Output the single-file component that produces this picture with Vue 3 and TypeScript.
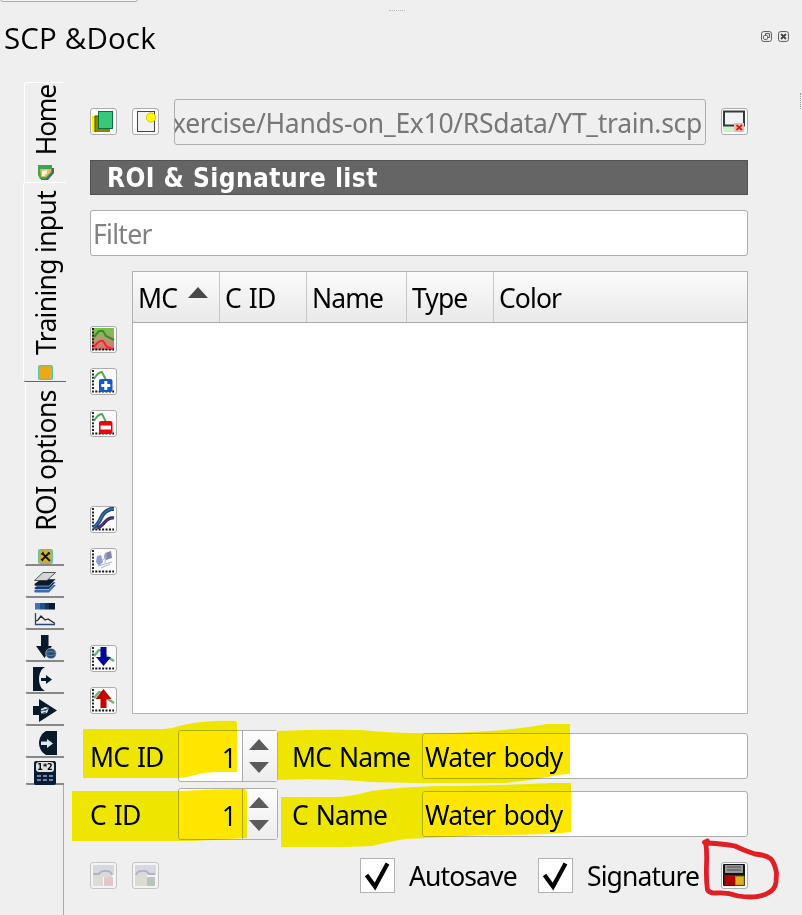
<script setup lang="ts">
import { ref } from 'vue'

interface SpectralTool {
  id: string
}

interface ClassRow {
  idLabel: string
  nameLabel: string
  id: number
  name: string
}

const columns: string[] = ['MC', 'C ID', 'Name', 'Type', 'Color']
const toolGroups: SpectralTool[][] = [
  [{ id: 'merge' }, { id: 'add' }, { id: 'remove' }],
  [{ id: 'signature' }, { id: 'scatter' }],
  [{ id: 'import' }, { id: 'export' }],
]
const filePath = 'xercise/Hands-on_Ex10/RSdata/YT_train.scp'
const rows = ref<ClassRow[]>([
  { idLabel: 'MC ID', nameLabel: 'MC Name', id: 1, name: 'Water body' },
  { idLabel: 'C ID', nameLabel: 'C Name', id: 1, name: 'Water body' },
])
const smallTabs: string[] = ['bands', 'plots', 'download', 'preprocess', 'process', 'postprocess', 'calc']
</script>

<template>
  <div class="dock">
    <div class="upper-edge"></div>
    <div class="grip-h"></div>
    <div class="grip-v"></div>

    <header class="titlebar">
      <h1>SCP &amp;Dock</h1>
      <div class="window-buttons">
        <svg width="11" height="11" viewBox="0 0 11 11">
          <rect x=".6" y=".6" width="9.8" height="9.8" rx="2" fill="#f5f5f5" stroke="#555" />
          <path d="M4.5 4V2.6H8.4V6.5H7" fill="none" stroke="#555" />
          <rect x="2.6" y="4.4" width="4" height="4" rx="1" fill="none" stroke="#555" />
        </svg>
        <svg width="11" height="11" viewBox="0 0 11 11">
          <rect x=".6" y=".6" width="9.8" height="9.8" rx="2" fill="#f5f5f5" stroke="#555" />
          <path d="M3 3L8 8M8 3L3 8" stroke="#444" stroke-width="1.8" />
        </svg>
      </div>
    </header>

    <div class="body">
      <nav class="tabs">
        <div class="tab home">
          <span class="tab-label">Home</span>
          <svg width="16" height="16" viewBox="0 0 16 16">
            <path d="M2 3H16V8L10 15H3Z" fill="#456c5c" />
            <path d="M0 0H14V7L8 14H2L0 10Z" fill="#3da64b" />
            <path d="M2 4H13V7L8 12H3Z" fill="#e9b56d" />
            <path d="M4 6L9 5L9 8L6 11H4Z" fill="#fff6dd" />
          </svg>
        </div>
        <div class="tab training">
          <span class="tab-label">Training input</span>
          <svg width="15" height="15" viewBox="0 0 15 15">
            <rect x=".6" y=".6" width="13.8" height="13.8" rx="1.5" fill="#eba915" stroke="#4fc6c0" stroke-width="1.2" />
          </svg>
        </div>
        <div class="tab options">
          <span class="tab-label">ROI options</span>
          <svg width="15" height="15" viewBox="0 0 15 15">
            <rect x=".6" y=".6" width="13.8" height="13.8" rx="1.5" fill="#d9ad2c" stroke="#4fc6c0" stroke-width="1.2" />
            <path d="M4 4L12 12M11.5 3.5L4 11" stroke="#151515" stroke-width="1.8" />
            <path d="M2.8 5L5 5L5 2.8M10 3.5L12 5M3 10L5 12" fill="none" stroke="#151515" stroke-width="1.2" />
          </svg>
        </div>
        <div v-for="t in smallTabs" :key="t" class="tab small" :class="t">
          <svg v-if="t === 'bands'" width="24" height="24" viewBox="0 0 24 24">
            <path d="M1 20L8 14H23L16 21.5H2Z" fill="#376bad" />
            <path d="M1 17L8 11H23L16 18.5H2Z" fill="#19396b" stroke="#e6edf5" stroke-width=".6" />
            <path d="M1 13L8 8H23L16 15H2Z" fill="#071a30" stroke="#e6edf5" stroke-width=".5" />
            <path d="M1.5 9.5L10 1.5H22.5L14 9.5Z" fill="#d5d7d7" stroke="#333" stroke-width=".8" />
          </svg>
          <svg v-else-if="t === 'plots'" width="24" height="24" viewBox="0 0 24 24">
            <rect x="2" y="0" width="5" height="6.5" fill="#3d76b5" />
            <rect x="7" y="0" width="5" height="6.5" fill="#295084" />
            <rect x="12" y="0" width="4" height="6.5" fill="#16345c" />
            <rect x="16" y="0" width="6" height="6.5" fill="#071b32" />
            <path d="M2.5 10V21.5H22" fill="none" stroke="#28477a" stroke-width="1.3" />
            <path d="M3 18L5 17L8 13L12 17L15 16L22 20.5" fill="none" stroke="#20262e" stroke-width="1.3" />
          </svg>
          <svg v-else-if="t === 'download'" width="24" height="24" viewBox="0 0 24 24">
            <path d="M8 0H15.5V11H19L11.5 23L3 11H8Z" fill="#071a2c" />
            <circle cx="18" cy="18.5" r="5.3" fill="#294d76" stroke="#dfe8ef" stroke-width=".6" />
            <path d="M13 17.5Q18 15 23 17.5M13 19.5Q18 22 23 19.5" fill="none" stroke="#7894af" stroke-width=".7" />
          </svg>
          <svg v-else-if="t === 'preprocess'" width="24" height="24" viewBox="0 0 24 24">
            <path d="M0 0H12C4 4 4 20 12 24H0Z" fill="#071a2c" />
            <path d="M8 11H13V8L19 12.5L13 17V14H8Z" fill="#071a2c" />
          </svg>
          <svg v-else-if="t === 'process'" width="24" height="24" viewBox="0 0 24 24">
            <path d="M0 7H6V0L24 11.5L6 23V16H0Z" fill="#071a2c" />
            <path d="M8 10L12 8L16 9L14 14L8 15Z" fill="#dce5ea" />
            <path d="M7 12L13 11L16 9M8 15L13 13" stroke="#36546c" />
          </svg>
          <svg v-else-if="t === 'postprocess'" width="24" height="24" viewBox="0 0 24 24">
            <path d="M24 0V24H13C9 22 6 17 6 12S9 2 13 0Z" fill="#071a2c" />
            <path d="M8 10.5H14V8L20 12.5L14 17V14H8Z" fill="#dae8f5" />
          </svg>
          <svg v-else width="24" height="24" viewBox="0 0 24 24">
            <rect x="1" y="0" width="22" height="24" rx="2" fill="#071b31" />
            <rect x="3" y="1" width="18" height="10" rx="3" fill="#dfe3e4" />
            <text x="12" y="8.5" text-anchor="middle">1*2</text>
            <g fill="#7182b5">
              <rect x="4" y="14" width="4" height="2" /><rect x="10" y="14" width="4" height="2" /><rect x="16" y="14" width="4" height="2" />
              <rect x="4" y="18" width="4" height="2" /><rect x="10" y="18" width="4" height="2" /><rect x="16" y="18" width="4" height="2" />
            </g>
          </svg>
        </div>
        <div class="tabs-rest"></div>
      </nav>

      <main class="panel">
        <div class="file-row">
          <button class="tool">
            <svg width="25" height="25" viewBox="0 0 25 25">
              <path d="M1 7H4V23H1Z" fill="#f5f500" /><rect x="4" y="7" width="15" height="16" fill="#8c8500" />
              <path d="M4 7H8M4 23V7" stroke="#4e4900" stroke-width="1" />
              <rect x="7.5" y="2.5" width="14" height="17" fill="#38c878" stroke="#087142" />
            </svg>
          </button>
          <button class="tool">
            <svg width="25" height="25" viewBox="0 0 25 25">
              <rect x="4.5" y="2.5" width="17" height="20" fill="#f2f2f2" stroke="#444" />
              <circle cx="18" cy="8.5" r="4.6" fill="#ffff00" stroke="#d7c400" />
            </svg>
          </button>
          <div class="path-field"><span>{{ filePath }}</span></div>
          <button class="tool end">
            <svg width="25" height="25" viewBox="0 0 25 25">
              <path d="M1 17H13V23H2L1 22Z" fill="#c9f5cb" />
              <rect x="2" y="2.5" width="20" height="14" fill="#f1f2f4" stroke="#303b3b" stroke-width="2" />
              <rect x="12" y="14" width="10" height="9" fill="#eebaaf" />
              <path d="M14.5 16L20 21M20 16L14.5 21" stroke="#ed1717" stroke-width="1.8" />
            </svg>
          </button>
        </div>

        <h2 class="section-title"><span>ROI &amp; Signature list</span></h2>
        <div class="filter"><span>Filter</span></div>

        <div class="list-area">
          <div class="tools">
            <div v-for="(group, gi) in toolGroups" :key="gi" class="tool-group">
              <button v-for="tool in group" :key="tool.id" class="tool">
                <svg width="25" height="25" viewBox="0 0 25 25">
                  <defs v-if="tool.id === 'merge'">
                    <linearGradient id="mergeFill" x1="0" y1="0" x2="0" y2="1">
                      <stop offset="0" stop-color="#71c54b" /><stop offset=".5" stop-color="#b29b70" /><stop offset="1" stop-color="#f0626b" />
                    </linearGradient>
                  </defs>
                  <rect v-if="tool.id === 'merge'" x="1" y="1" width="22" height="22" fill="url(#mergeFill)" />
                  <path d="M2 1V22.5H23" fill="none" stroke="#111" stroke-width="1.8" stroke-dasharray="2 1.4" />
                  <template v-if="tool.id === 'merge'">
                    <path d="M3 10L8 4L12 4L15 9L23 13" fill="none" stroke="#308e2f" stroke-width="2" />
                    <path d="M3 20Q8 13 12 14L16 20L22 22" fill="none" stroke="#ed2637" stroke-width="2" />
                  </template>
                  <template v-else-if="tool.id === 'add'">
                    <path d="M3 10Q7 3 11 3L15 11" fill="none" stroke="#54a45b" stroke-width="1.9" />
                    <rect x="8" y="10" width="13.5" height="13" rx="2" fill="#1557ce" />
                    <path d="M14.8 12V21M10.3 16.5H19.3" stroke="#fff" stroke-width="3" />
                  </template>
                  <template v-else-if="tool.id === 'remove'">
                    <path d="M3 10Q7 3 11 3L15 11" fill="none" stroke="#54a45b" stroke-width="1.9" />
                    <rect x="8" y="10" width="13.5" height="13" rx="2" fill="#f00008" />
                    <rect x="9.5" y="14.5" width="10.5" height="4" fill="#fff" />
                  </template>
                  <template v-else-if="tool.id === 'signature'">
                    <path d="M2 21Q7 18 10 11T20 2H23" fill="none" stroke="#214c80" stroke-width="4" />
                    <path d="M2 21Q7 18 10 11T20 2H23" fill="none" stroke="#5585ac" stroke-width="1" />
                    <path d="M6 21Q10 20 14 15T23 11" fill="none" stroke="#30245f" stroke-width="3.2" />
                    <path d="M6 21Q10 20 14 15T23 11" fill="none" stroke="#7760a0" stroke-width=".6" />
                  </template>
                  <template v-else-if="tool.id === 'scatter'">
                    <path d="M6 7L10 6L12 13L8 17L5 13Z" fill="#8f9bd7" />
                    <path d="M14 4L20 2L21 9L15 11L13 8Z" fill="#8088a7" />
                    <path d="M10 12L16 8M7 17L21 13M10 19L19 15M15 4L14 14" stroke="#adb1d3" />
                  </template>
                  <template v-else-if="tool.id === 'import'">
                    <path d="M3 10L8 4L12 5L15 10L23 15" fill="none" stroke="#6bb370" stroke-width="2.4" />
                    <path d="M9.5 1H15.5V11H20L12.5 20L5 11H9.5Z" fill="#050596" />
                  </template>
                  <template v-else>
                    <path d="M3 10L8 4L12 5L15 10L23 15" fill="none" stroke="#6bb370" stroke-width="2.4" />
                    <path d="M12.5 1L20.5 11H15.5V20H9.5V11H4.5Z" fill="#c40205" />
                  </template>
                </svg>
              </button>
            </div>
          </div>
          <div class="table">
            <div class="table-head">
              <div v-for="c in columns" :key="c" class="cell">
                <span>{{ c }}</span>
                <i v-if="c === 'MC'" class="sort"></i>
              </div>
            </div>
          </div>
        </div>

        <div class="class-rows">
          <div v-for="r in rows" :key="r.idLabel" class="class-row">
            <label>{{ r.idLabel }}</label>
            <div class="spin">
              <span class="value">{{ r.id }}</span>
              <div class="arrows"><i class="up"></i><i class="down"></i></div>
            </div>
            <label class="name-label">{{ r.nameLabel }}</label>
            <div class="name-field"><span>{{ r.name }}</span></div>
          </div>
        </div>

        <div class="footer">
          <button class="tool faded">
            <svg width="25" height="25" viewBox="0 0 25 25">
              <rect x="2" y="2" width="21" height="10" fill="#d8d8e2" /><rect x="2" y="12" width="10" height="11" fill="#dedbd2" />
              <path d="M3 12V11H8Q10 7 16 8Q20 8 21 12" fill="none" stroke="#b0b2be" stroke-width="1.8" />
              <path d="M12 12H21V14H12Z" fill="#dedbd2" />
              <rect x="13" y="14" width="9" height="9" rx="1" fill="#e3c8cb" />
            </svg>
          </button>
          <button class="tool faded">
            <svg width="25" height="25" viewBox="0 0 25 25">
              <rect x="2" y="2" width="21" height="10" fill="#d8d8e2" /><rect x="2" y="12" width="12" height="11" fill="#dedbd2" />
              <path d="M3 12Q4 8 9 8Q14 7 16 11H22" fill="none" stroke="#b0b2be" stroke-width="1.8" />
              <rect x="14" y="14" width="8" height="9" rx="1" fill="#b9c6ba" />
            </svg>
          </button>
          <div class="check first">
            <svg width="35" height="35" viewBox="0 0 35 35"><path d="M6.5 17L15 28.500L27.5 5.5" /></svg>
          </div>
          <span class="check-label autosave">Autosave</span>
          <div class="check">
            <svg width="35" height="35" viewBox="0 0 35 35"><path d="M6.5 17L15 28.500L27.5 5.5" /></svg>
          </div>
          <span class="check-label signature">Signature</span>
          <button class="tool end">
            <svg width="25" height="25" viewBox="0 0 25 25">
              <rect x="1" y="1" width="22" height="22" rx="1" fill="#111" />
              <rect x="3" y="2" width="18" height="8" fill="#979a9b" />
              <path d="M5 4H19M5 7H19" stroke="#4d5051" stroke-width="1.2" />
              <path d="M2.5 12H22V14H13V22H2.5Z" fill="#af0303" />
              <rect x="13.5" y="13.5" width="8.5" height="8.5" fill="#e2ad22" stroke="#a7841c" />
            </svg>
          </button>
        </div>
      </main>
    </div>

    <svg class="marker" width="802" height="915" viewBox="0 0 802 915">
      <path d="M83 729H164Q174 728 183 725Q207 720 236 721Q237 722 237 724V772H220Q205 772 195 775Q185 778 178 778H83Z" />
      <path d="M72 791H178Q215 789 245 789L247 792V838Q220 840 190 841H72Z" />
      <path d="M278 731Q320 729 361 730Q420 736 490 731Q520 729 547 724H570V774Q560 774 548 777Q528 781 505 783Q440 784 370 782Q330 778 278 780Z" />
      <path d="M281 797H334Q350 797 371 791Q400 787 440 786Q490 786 550 783H571V832Q550 835 490 835L405 839Q387 842 372 846Q350 847 340 847H281Z" />
    </svg>
    <svg class="pen" width="802" height="915" viewBox="0 0 802 915">
      <path d="M704.5 842.5L707.5 841L706 845Q707 852 706.5 865Q706 880 707.5 890Q710 893.5 716 893Q727 892 738 896Q758 899 768 893Q775 890 776 882L776.5 873Q775 864 771 859Q766 855 755 854Q743 850 735 846Q724 844 708 843" />
    </svg>
  </div>
</template>

<style>
body {
  background: #efefef;
  overflow: hidden;
}
</style>

<style scoped>
* {
  box-sizing: border-box;
}
.dock {
  position: relative;
  width: 802px;
  height: 915px;
  overflow: hidden;
  background: #efefef;
  color: #000;
  font: 26.5px/32px "Noto Sans", "DejaVu Sans Condensed", sans-serif;
  letter-spacing: -0.9px;
  word-spacing: 2px;
  white-space: nowrap;
  isolation: isolate;
}
.upper-edge {
  position: absolute;
  left: 0;
  top: -10px;
  width: 138px;
  height: 12px;
  border: 1px solid #aaa;
  border-radius: 3px;
  background: #f6f6f6;
}
.grip-h {
  position: absolute;
  left: 389px;
  top: 10px;
  width: 16px;
  border-top: 1px dotted #bbb;
}
.grip-v {
  position: absolute;
  left: 800px;
  top: 93px;
  height: 16px;
  border-left: 1px dotted #999;
}
.titlebar {
  display: flex;
  justify-content: space-between;
  height: 77px;
  padding: 18px 13px 0 4px;
}
h1 {
  margin: 0;
  font: 400 29.5px/40px "Open Sans", "Noto Sans", sans-serif;
  letter-spacing: 0.15px;
  word-spacing: 0;
}
.window-buttons {
  display: flex;
  gap: 6px;
  padding-top: 13px;
}
svg {
  display: block;
  flex: none;
}
.body {
  display: flex;
  height: 838px;
}
.tabs {
  display: flex;
  flex-direction: column;
  width: 90px;
  padding-left: 23px;
}
.tab {
  display: flex;
  flex-direction: column;
  align-items: center;
  justify-content: flex-end;
  border-left: 1px solid #fff;
  flex: none;
}
.tab-label {
  writing-mode: vertical-rl;
  transform: rotate(180deg);
  margin-left: 1px;
  font-size: 26.5px;
  line-height: 32px;
  letter-spacing: -0.7px;
  word-spacing: 0;
}
.home {
  margin: 5px 0 0 1px;
  width: 39px;
  height: 100px;
  padding: 0 0 1px 3px;
  border-top: 1px solid #fff;
  border-top-left-radius: 3px;
  gap: 10px;
}
.home .tab-label {
  margin-left: 0;
  letter-spacing: -1.3px;
}
.training {
  width: 43px;
  height: 200px;
  padding-bottom: 1px;
  border-top: 1px solid #fff;
  border-bottom: 1px solid #666;
  border-radius: 3px 0 0 3px;
  gap: 10px;
}
.options {
  margin-left: 2px;
  width: 39px;
  height: 184px;
  border-bottom: 2px solid #888;
  gap: 18px;
}
.options .tab-label {
  letter-spacing: -0.55px;
}
.small {
  margin-left: 2px;
  width: 39px;
  height: 32px;
  padding-bottom: 1px;
  border-bottom: 2px solid #888;
  border-bottom-left-radius: 3px;
}
.calc {
  height: 27px;
  padding: 0;
}
.calc svg {
  margin-bottom: -2px;
}
.calc text {
  font: 700 8px "DejaVu Sans", sans-serif;
  letter-spacing: 0;
}
.tabs-rest {
  flex: 1;
  width: 41px;
  border-right: 1px solid #aaa;
}
.panel {
  width: 658px;
  padding-top: 22px;
}
.tool {
  display: block;
  flex: none;
  width: 27px;
  height: 27px;
  padding: 0;
  border: 1px solid #acacac;
  border-radius: 3px;
  background: #fcfcfc;
}
.faded {
  border-color: #c5c5c5;
  background: #f4f4f4;
}
.file-row {
  display: flex;
  align-items: center;
  height: 46px;
  gap: 15px;
}
.file-row .tool {
  margin-bottom: 1px;
}
.path-field,
.filter,
.name-field {
  display: flex;
  align-items: center;
  height: 46px;
  padding-top: 2px;
  border: 1px solid #adadad;
  border-radius: 3px;
}
.path-field {
  width: 532px;
  justify-content: flex-end;
  overflow: hidden;
  padding-right: 3px;
  color: #777;
  letter-spacing: -0.3px;
}
.section-title {
  display: flex;
  align-items: center;
  height: 35px;
  margin: 15px 0;
  padding: 1px 0 0 16px;
  border: 1px solid #525252;
  background: #656565;
  color: #fff;
  font: 700 26px/32px "DejaVu Sans Condensed", "DejaVu Sans", sans-serif;
  font-stretch: condensed;
  letter-spacing: 0.45px;
  word-spacing: 0;
}
.filter {
  padding-left: 2px;
  background: #fff;
  color: #808080;
  letter-spacing: -0.7px;
}
.list-area {
  display: flex;
  height: 443px;
  margin-top: 15px;
}
.tools {
  display: flex;
  flex-direction: column;
  width: 42px;
  padding-top: 55px;
}
.tool-group {
  display: flex;
  flex-direction: column;
  gap: 15px;
}
.tool-group:nth-child(2) {
  margin-top: 69px;
}
.tool-group:nth-child(3) {
  margin-top: 70px;
}
.table {
  flex: 1;
  border: 1px solid #b2b2b2;
  background: #fff;
}
.table-head {
  display: grid;
  grid-template-columns: 87px 87px 100px 87px 1fr;
  height: 51px;
  border-bottom: 1px solid #aaa;
  background: linear-gradient(#fbfbfb, #e9e9e9);
}
.cell {
  display: flex;
  align-items: center;
  padding: 2px 0 0 5px;
  border-right: 1px solid #c6c6c6;
}
.cell:last-child {
  border-right: 0;
}
.sort {
  margin: -11px 11px 0 auto;
  border: 10px solid transparent;
  border-top: 0;
  border-bottom: 11px solid #484848;
}
.class-rows {
  display: flex;
  flex-direction: column;
  gap: 6px;
  margin-top: 16px;
}
.class-row {
  display: grid;
  grid-template-columns: 88px 100px 144px 326px;
  align-items: center;
  height: 52px;
}
.class-row label {
  padding-top: 2px;
}
.class-row .name-label {
  padding-left: 14px;
}
.spin {
  display: flex;
  height: 52px;
  border: 1px solid #adadad;
  border-radius: 3px;
  background: #fff;
}
.value {
  flex: 1;
  padding: 11px 6px 0 0;
  text-align: right;
}
.arrows {
  display: flex;
  flex-direction: column;
  align-items: center;
  gap: 12px;
  width: 35px;
  padding: 8px 2px 0 0;
  border-left: 1px solid #aaa;
  background: linear-gradient(#fdfdfd, #ededed);
}
.up,
.down {
  border: 10px solid transparent;
}
.up {
  border-top: 0;
  border-bottom: 11px solid #5b5b5b;
}
.down {
  border-bottom: 0;
  border-top: 11px solid #5b5b5b;
}
.name-field {
  padding-left: 2px;
  background: #fff;
  letter-spacing: -0.8px;
}
.footer {
  display: flex;
  align-items: center;
  height: 35px;
  margin-top: 18px;
}
.footer .faded + .faded {
  margin-left: 15px;
}
.check {
  width: 35px;
  height: 35px;
  border: 1px solid #b2b2b2;
  background: #fff;
}
.check svg {
  margin: -1px;
}
.check path {
  fill: none;
  stroke: #000;
  stroke-width: 4.2;
}
.first {
  margin-left: 201px;
}
.check-label {
  padding: 1px 0 0 14px;
}
.autosave {
  width: 143px;
}
.signature {
  width: 148px;
}
.marker,
.pen {
  position: absolute;
  left: 0;
  top: 0;
  pointer-events: none;
}
.marker {
  mix-blend-mode: darken;
  fill: #ffe600;
}
.pen {
  fill: none;
  stroke: #e01f24;
  stroke-width: 4.8;
  stroke-linecap: round;
  stroke-linejoin: round;
}
</style>
